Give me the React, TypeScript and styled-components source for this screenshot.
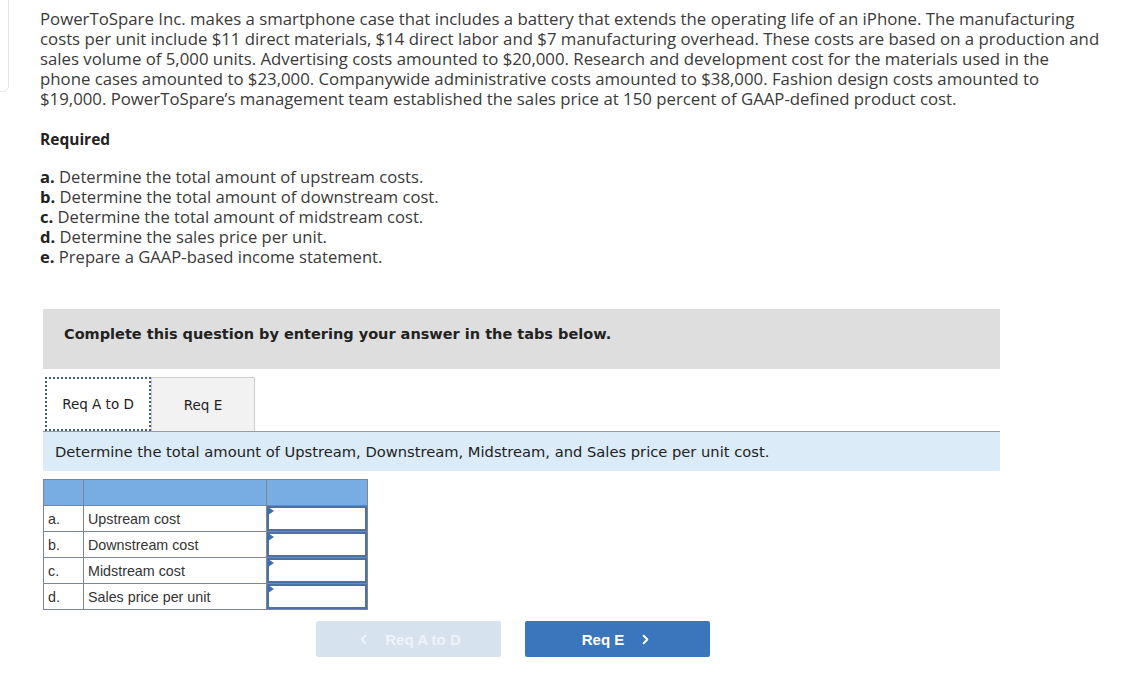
import styled, { createGlobalStyle } from "styled-components";
import { ChevronLeft, ChevronRight } from "lucide-react";

const GlobalStyle = createGlobalStyle`
  body {
    margin: 0;
    background: #ffffff;
    font-family: "Open Sans", "Liberation Sans", sans-serif;
  }
`;

const rows = [
  { key: "a.", label: "Upstream cost" },
  { key: "b.", label: "Downstream cost" },
  { key: "c.", label: "Midstream cost" },
  { key: "d.", label: "Sales price per unit" },
];

const required = [
  { key: "a.", text: "Determine the total amount of upstream costs." },
  { key: "b.", text: "Determine the total amount of downstream cost." },
  { key: "c.", text: "Determine the total amount of midstream cost." },
  { key: "d.", text: "Determine the sales price per unit." },
  { key: "e.", text: "Prepare a GAAP-based income statement." },
];

export default function App() {
  return (
    <>
      <GlobalStyle />
      <Page>
        <SideCard />
        <Intro>
          PowerToSpare Inc. makes a smartphone case that includes a battery that
          extends the operating life of an iPhone. The manufacturing
          <br />
          costs per unit include $11 direct materials, $14 direct labor and $7
          manufacturing overhead. These costs are based on a production and
          <br />
          sales volume of 5,000 units. Advertising costs amounted to $20,000.
          Research and development cost for the materials used in the
          <br />
          phone cases amounted to $23,000. Companywide administrative costs
          amounted to $38,000. Fashion design costs amounted to
          <br />
          $19,000. PowerToSpare’s management team established the sales price
          at 150 percent of GAAP-defined product cost.
        </Intro>

        <RequiredTitle>Required</RequiredTitle>
        <RequiredList>
          {required.map((r) => (
            <li key={r.key}>
              <b>{r.key}</b> {r.text}
            </li>
          ))}
        </RequiredList>

        <Question>
          <Banner>
            Complete this question by entering your answer in the tabs below.
          </Banner>

          <Tabs>
            <Tab $active>Req A to D</Tab>
            <Tab>Req E</Tab>
          </Tabs>
          <Instruction>
            Determine the total amount of Upstream, Downstream, Midstream, and
            Sales price per unit cost.
          </Instruction>

          <AnswerTable>
            <thead>
              <tr>
                <HeadCell $w={40} />
                <HeadCell $w={183} />
                <HeadCell $w={101} />
              </tr>
            </thead>
            <tbody>
              {rows.map((r) => (
                <tr key={r.key}>
                  <Cell>{r.key}</Cell>
                  <Cell>{r.label}</Cell>
                  <InputCell>
                    <AnswerInput />
                  </InputCell>
                </tr>
              ))}
            </tbody>
          </AnswerTable>

          <Nav>
            <NavButton $disabled>
              <ChevronLeft size={15} strokeWidth={3} />
              Req A to D
            </NavButton>
            <NavButton>
              Req E
              <ChevronRight size={15} strokeWidth={3} />
            </NavButton>
          </Nav>
        </Question>
      </Page>
    </>
  );
}

const Page = styled.div`
  position: relative;
  padding: 9px 0 40px 40px;
  color: #333333;
`;

const SideCard = styled.div`
  position: absolute;
  left: -20px;
  top: -10px;
  width: 27px;
  height: 100px;
  border: 1px solid #e6e6e6;
  border-radius: 6px;
`;

const Intro = styled.p`
  margin: 0;
  font-size: 16.8px;
  line-height: 20px;
  white-space: nowrap;
  color: #3a3a3a;
`;

const RequiredTitle = styled.h4`
  margin: 20px 0 0;
  font-size: 15.5px;
  line-height: 20px;
  font-weight: 700;
  color: #222222;
`;

const RequiredList = styled.ul`
  list-style: none;
  margin: 18px 0 0;
  padding: 0;
  font-size: 16.6px;
  line-height: 20px;
  color: #3a3a3a;

  li {
    height: 20px;
  }

  b {
    font-weight: 700;
    color: #222222;
  }
`;

const Question = styled.div`
  margin: 42px 0 0 3px;
  width: 957px;
  font-family: "DejaVu Sans", Verdana, sans-serif;
`;

const Banner = styled.div`
  height: 60px;
  box-sizing: border-box;
  padding: 16px 0 0 21px;
  background: #dedede;
  font-size: 14.5px;
  line-height: 18px;
  font-weight: 700;
  color: #222222;
`;

const Tabs = styled.div`
  display: flex;
  margin-top: 8px;
  padding-left: 2px;
`;

const Tab = styled.div<{ $active?: boolean }>`
  width: ${(p) => (p.$active ? "106px" : "104px")};
  height: 54px;
  box-sizing: border-box;
  display: flex;
  align-items: center;
  justify-content: center;
  font-size: 13.5px;
  color: #222222;
  background: ${(p) => (p.$active ? "#ffffff" : "#f2f2f2")};
  border: ${(p) => (p.$active ? "2px dotted #3f5f8a" : "1px solid #cccccc")};
  border-bottom: ${(p) => (p.$active ? "2px dotted #3f5f8a" : "none")};
  margin-bottom: ${(p) => (p.$active ? "-1px" : "0")};
  position: relative;
  z-index: 1;
`;

const Instruction = styled.div`
  height: 39px;
  display: flex;
  align-items: center;
  padding-left: 12px;
  border-top: 1px solid #9a9a9a;
  background: #dbebf8;
  font-size: 14.7px;
  color: #222222;
`;

const AnswerTable = styled.table`
  margin-top: 8px;
  border-collapse: collapse;
  font-family: "Liberation Sans", Arial, sans-serif;
  font-size: 14.3px;
  color: #333333;
`;

const HeadCell = styled.th<{ $w: number }>`
  width: ${(p) => p.$w}px;
  height: 26px;
  padding: 0;
  background: #78ade3;
  border: 1px solid #7d8794;
  box-sizing: border-box;
`;

const Cell = styled.td`
  height: 26px;
  padding: 0 4px;
  border: 1px solid #7d8794;
  box-sizing: border-box;
`;

const InputCell = styled.td`
  height: 26px;
  padding: 0;
  border: 1px solid #7d8794;
  box-sizing: border-box;
  position: relative;

  &::before {
    content: "";
    position: absolute;
    left: 1px;
    top: 1px;
    border-top: 4px solid transparent;
    border-bottom: 4px solid transparent;
    border-left: 6px solid #3d6fb0;
  }
`;

const AnswerInput = styled.div`
  height: 25px;
  box-sizing: border-box;
  border: 2px solid #4a72a8;
  background: #ffffff;
`;

const Nav = styled.div`
  display: flex;
  gap: 24px;
  margin: 11px 0 0 273px;
`;

const NavButton = styled.div<{ $disabled?: boolean }>`
  width: 185px;
  height: 36px;
  display: flex;
  align-items: center;
  justify-content: center;
  gap: 14px;
  border-radius: 2px;
  font-family: "Liberation Sans", Arial, sans-serif;
  font-size: 15px;
  font-weight: 700;
  color: ${(p) => (p.$disabled ? "#eef3f9" : "#ffffff")};
  background: ${(p) => (p.$disabled ? "#d7e2ef" : "#3b76bc")};
`;
